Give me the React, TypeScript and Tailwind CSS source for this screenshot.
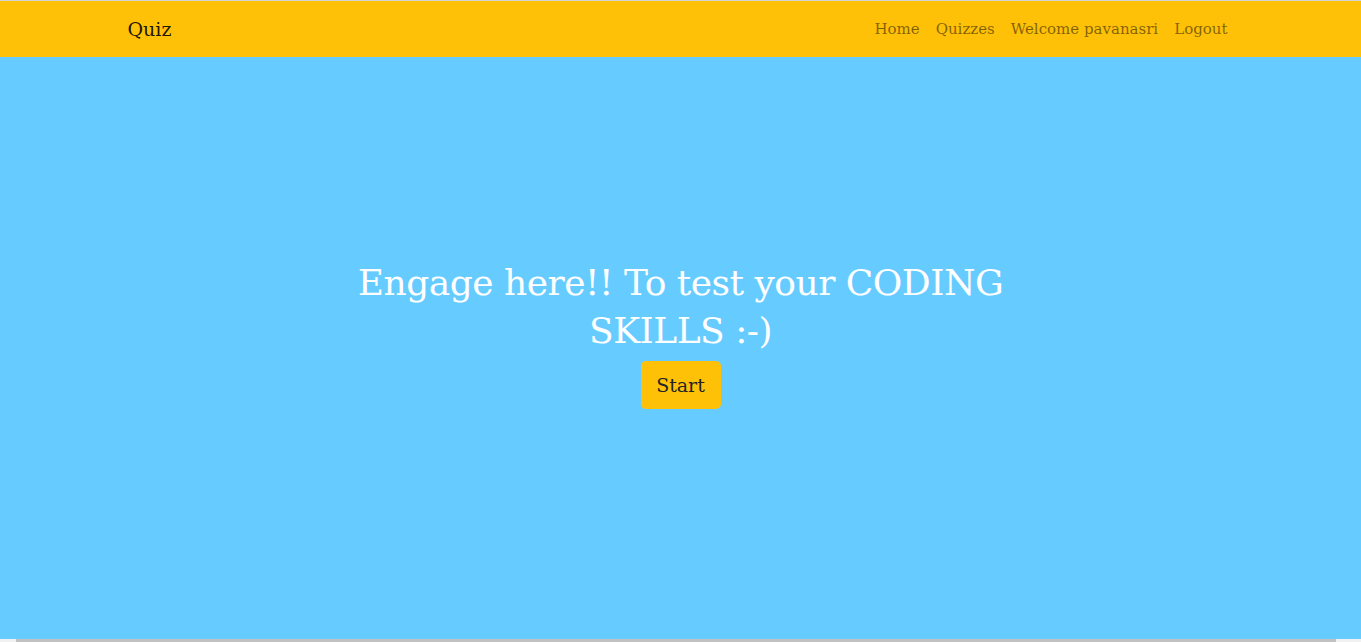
import React from "react";

const links = ["Home", "Quizzes", "Welcome pavanasri", "Logout"];

const App = () => {
  return (
    <div className="w-[1361px] h-[642px] overflow-hidden bg-white" style={{ fontFamily: "'DejaVu Serif', serif" }}>
      <div className="h-px bg-[#d4d4d4]" />
      <nav className="h-[56px] bg-[#ffc107]">
        <div className="mx-auto w-[1140px] px-[15px] h-full flex items-center justify-between">
          <a className="text-[19px] text-black/90 pl-[2px]">Quiz</a>
          <ul className="flex">
            {links.map((l) => (
              <li key={l} className="px-2 text-[15px] text-black/50">
                {l}
              </li>
            ))}
          </ul>
        </div>
      </nav>
      <section className="h-[582px] bg-[#66ccff] flex flex-col items-center pt-[202px]">
        <h1 className="text-white text-[36px] leading-[48px] text-center tracking-[-0.5px]">
          <span className="block">Engage here!! To test your CODING</span>
          <span className="block">SKILLS :-)</span>
        </h1>
        <button className="mt-[6px] w-[80px] h-[48px] rounded-[5px] bg-[#ffc107] text-[#212529] text-[19px]">
          Start
        </button>
      </section>
      <div className="h-[3px] bg-[#f1f1f1] flex">
        <div className="ml-[16px] w-[1320px] bg-[#c1c1c1]" />
      </div>
    </div>
  );
};

export default App;
